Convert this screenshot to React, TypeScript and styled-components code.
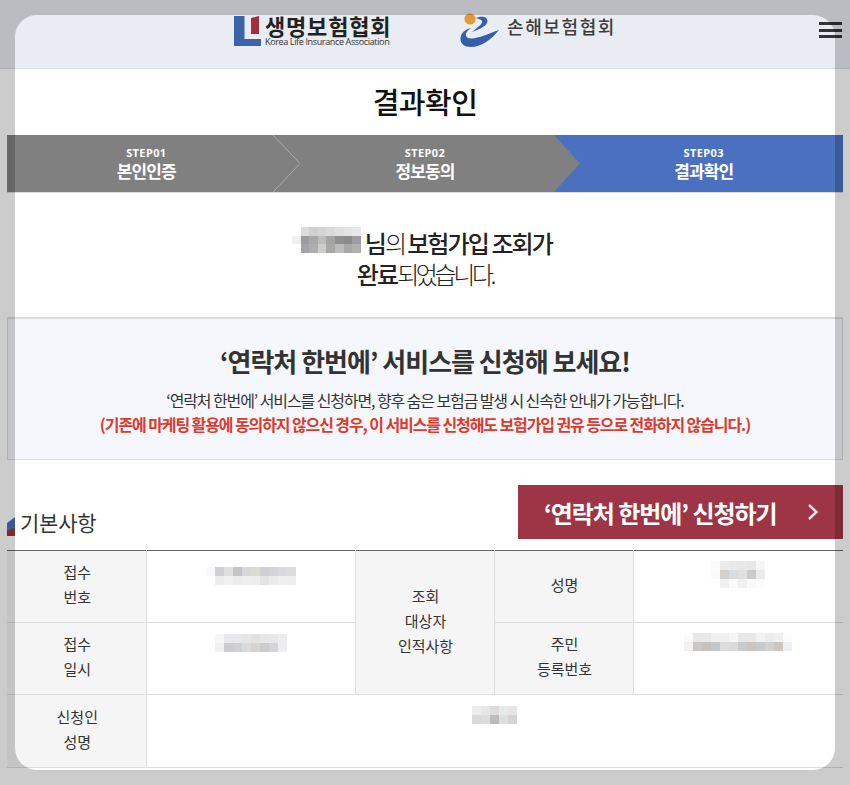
import React from "react";
import styled, { createGlobalStyle } from "styled-components";

const Global = createGlobalStyle`
  html, body { margin: 0; padding: 0; background: #fff; overflow: hidden; height: 100%; }
  body { font-family: "Noto Sans CJK KR", "Noto Sans", sans-serif; color: #333; }
  * { box-sizing: border-box; }
`;

const Page = styled.div`
  width: 850px;
  height: 785px;
  overflow: hidden;
`;

const Header = styled.header`
  height: 69px;
  background: #e9ecf2;
  border-bottom: 1px solid #dcdee2;
  display: grid;
  grid-template-columns: 1fr auto 1fr;
  align-items: start;
`;

const Logos = styled.div`
  grid-column: 2;
  display: flex;
  gap: 71px;
  padding-top: 13px;
`;

const LogoLink = styled.a`
  display: flex;
  align-items: flex-start;
  color: #2b2b2b;
`;

const LifeText = styled.div`
  margin-left: 4px;
  display: flex;
  flex-direction: column;
  width: 124px;
  padding-top: 1px;
`;

const LifeName = styled.span`
  font-size: 22px;
  font-weight: 700;
  line-height: 22px;
  letter-spacing: 0.8px;
  white-space: nowrap;
  color: #222;
`;

const LifeEng = styled.span`
  font-family: "Open Sans", "Liberation Sans", sans-serif;
  font-size: 9px;
  line-height: 12px;
  letter-spacing: -0.36px;
  white-space: nowrap;
  color: #333;
`;

const DamageName = styled.span`
  margin-left: 7px;
  font-size: 18px;
  font-weight: 500;
  line-height: 26px;
  letter-spacing: 1.6px;
  white-space: nowrap;
  color: #3d3d3d;
`;

const Burger = styled.button`
  grid-column: 3;
  justify-self: end;
  margin: 22px 8px 0 0;
  padding: 0;
  width: 23px;
  height: 16px;
  border: 0;
  background: transparent;
  display: flex;
  flex-direction: column;
  justify-content: space-between;
`;

const BurgerLine = styled.span`
  height: 3px;
  background: #333;
`;

const Title = styled.h1`
  margin: 0;
  height: 66px;
  padding-bottom: 3px;
  display: flex;
  align-items: center;
  justify-content: center;
  font-size: 29px;
  font-weight: 500;
  color: #111;
  letter-spacing: -0.5px;
`;

const Steps = styled.ol`
  list-style: none;
  margin: 0 7px;
  padding: 0;
  display: flex;
  height: 58px;
  border-bottom: 1px solid #ddd;
`;

const Step = styled.li<{ $active?: boolean }>`
  position: relative;
  flex: 1;
  height: 57px;
  background: ${(p) => (p.$active ? "#4a70bf" : "#808080")};
  color: #fff;
  display: flex;
  flex-direction: column;
  align-items: center;
  padding-top: 11px;
`;

const StepNo = styled.span`
  font-family: "Noto Sans", sans-serif;
  font-size: 11px;
  font-weight: 700;
  line-height: 14px;
  letter-spacing: 0.4px;
`;

const StepName = styled.span`
  font-size: 17px;
  font-weight: 700;
  line-height: 22px;
  letter-spacing: -0.9px;
`;

const StepArrow = styled.svg<{ $right: number }>`
  position: absolute;
  top: 0;
  right: ${(p) => p.$right}px;
  width: 27px;
  height: 57px;
  z-index: 1;
`;

const Message = styled.div`
  height: 124px;
  padding-top: 33px;
  font-size: 24px;
  line-height: 32px;
  letter-spacing: -3.4px;
  font-weight: 300;
  color: #222;
`;

const MessageLine = styled.p<{ $offset?: number }>`
  margin: 0;
  height: 32px;
  display: flex;
  justify-content: center;
  align-items: flex-start;
  gap: 4px;
  padding-right: ${(p) => p.$offset ?? 0}px;
  padding-top: ${(p) => (p.$offset ? 1 : 0)}px;
`;

const MessageText = styled.span`
  white-space: nowrap;
`;

const Strong = styled.b`
  font-weight: 500;
  letter-spacing: -1.9px;
`;

const Notice = styled.section`
  margin: 0 7px;
  height: 143px;
  background: #f5f7fc;
  border: 1px solid #ddd;
  border-top-width: 2px;
  text-align: center;
  padding-top: 23px;
`;

const NoticeTitle = styled.h2`
  margin: 0 0 8px;
  font-size: 26px;
  line-height: 38px;
  font-weight: 700;
  letter-spacing: -1px;
  color: #333;
`;

const NoticeText = styled.p<{ $red?: boolean }>`
  margin: 0;
  font-size: 16px;
  line-height: 24px;
  letter-spacing: -1.1px;
  font-weight: ${(p) => (p.$red ? 700 : 400)};
  color: ${(p) => (p.$red ? "#e0392b" : "#333")};
`;

const SectionHead = styled.div`
  margin: 25px 7px 11px;
  height: 54px;
  display: flex;
  justify-content: space-between;
  align-items: flex-end;
`;

const SectionTitle = styled.h3`
  margin: 0 0 3px;
  display: flex;
  align-items: flex-end;
  font-size: 21px;
  line-height: 27px;
  font-weight: 400;
  color: #333;
  letter-spacing: -0.2px;
  gap: 5px;
`;

const ApplyButton = styled.button`
  width: 325px;
  height: 54px;
  border: 0;
  background: #9d3546;
  color: #fff;
  font-family: inherit;
  font-size: 24px;
  font-weight: 700;
  letter-spacing: -1.05px;
  display: flex;
  align-items: center;
  justify-content: space-between;
  padding: 0 24px 0 26px;
`;

const Table = styled.table`
  margin: 0 7px;
  width: 836px;
  border-collapse: collapse;
  table-layout: fixed;
  border-top: 1px solid #666;
  font-size: 15px;
  line-height: 25px;
  color: #333;
  th, td {
    height: 72px;
    border-bottom: 1px solid #ddd;
    border-left: 1px solid #ddd;
    text-align: center;
    padding: 0;
  }
  tr > :first-child { border-left: 0; }
  tr:last-child > * { height: 73px; }
`;

const Head = styled.th`
  background: #f5f5f5;
  font-weight: 400;
  vertical-align: middle;
  && { padding: 0 0 5px 2px; }
`;

const Val = styled.td`
  vertical-align: top;
  background: #fff;
`;

const MosaicGrid = styled.span<{ $cols: number; $size: number }>`
  display: inline-grid;
  grid-template-columns: repeat(${(p) => p.$cols}, ${(p) => p.$size}px);
  grid-auto-rows: ${(p) => p.$size}px;
  flex: none;
`;

const Tile = styled.i<{ $c: string }>`
  background: ${(p) => p.$c};
`;

const CellMosaic = styled.div<{ $top: number }>`
  display: flex;
  justify-content: center;
  padding-top: ${(p) => p.$top}px;
`;

const Overlay = styled.div`
  position: fixed;
  left: 15px;
  top: 15px;
  width: 820px;
  height: 755px;
  border-radius: 22px;
  box-shadow: 0 0 0 1000px rgba(0, 0, 0, 0.2);
  pointer-events: none;
  z-index: 5;
`;

const Mosaic = ({ cols, size = 9, colors }: { cols: number; size?: number; colors: string }) => (
  <MosaicGrid $cols={cols} $size={size}>
    {colors.split(" ").map((c, i) => (
      <Tile key={i} $c={"#" + c} />
    ))}
  </MosaicGrid>
);

const LifeMark = () => (
  <svg width="27" height="33" viewBox="0 0 27 33" aria-hidden="true">
    <path d="M0 3 L10.5 3 L10.5 26 L27 26 L27 34 L0 33Z" fill="#3c62a8" />
    <path d="M17 5 L25 3 L25 21 L17 21Z" fill="#a52f3e" />
  </svg>
);

const DamageMark = () => (
  <svg width="40" height="36" viewBox="0 0 40 36" aria-hidden="true">
    <path d="M39 17 C31 27 21 34 11 34 C3 34 -1 29 1 23 C2 19 6 16 11 15 C6 18 4 23 8 25 C16 27 27 21 39 17Z" fill="#3560a8" />
    <path d="M16 5 C24 2 29 5 27 10 C25 14 19 16 12 19 C18 14 23 11 22 8 C21 6 18 6 16 5Z" fill="#3560a8" />
    <circle cx="10" cy="6" r="5.6" fill="#e59a35" />
  </svg>
);

const SectionMark = () => (
  <svg width="8" height="19" viewBox="0 0 8 19" aria-hidden="true">
    <path d="M0 6 L8 0 L8 12 L0 13Z" fill="#4a70bf" />
    <path d="M0 13 L8 11 L8 19 L0 19Z" fill="#9d3546" />
  </svg>
);

export default function App() {
  return (
    <Page>
      <Global />
      <Header>
        <Logos>
          <LogoLink>
            <LifeMark />
            <LifeText>
              <LifeName>생명보험협회</LifeName>
              <LifeEng>Korea Life Insurance Association</LifeEng>
            </LifeText>
          </LogoLink>
          <LogoLink>
            <DamageMark />
            <DamageName>손해보험협회</DamageName>
          </LogoLink>
        </Logos>
        <Burger aria-label="메뉴">
          <BurgerLine />
          <BurgerLine />
          <BurgerLine />
        </Burger>
      </Header>

      <Title>결과확인</Title>

      <Steps>
        <Step>
          <StepNo>STEP01</StepNo>
          <StepName>본인인증</StepName>
          <StepArrow $right={-14} viewBox="0 0 27 57">
            <path d="M0 0 L27 28.5 L0 57" fill="none" stroke="#ababab" strokeWidth="1" />
          </StepArrow>
        </Step>
        <Step>
          <StepNo>STEP02</StepNo>
          <StepName>정보동의</StepName>
          <StepArrow $right={-17} viewBox="0 0 27 57">
            <rect width="27" height="57" fill="#4a70bf" />
            <path d="M0 0 L26 28.5 L0 57Z" fill="#808080" />
          </StepArrow>
        </Step>
        <Step $active>
          <StepNo>STEP03</StepNo>
          <StepName>결과확인</StepName>
        </Step>
      </Steps>

      <Message>
        <MessageLine $offset={6}>
          <Mosaic
            cols={8}
            size={8.6}
            colors="ffffff dcdcdc d0d0d0 d4d4d4 dadada e0e0e0 e4e4e4 e8e8e8 f0efec 9c9c9c a8a8a8 bdbdbd a4a4a4 909090 8c8c8c 9e9e9e ffffff a4a4a8 acaeb2 cfcdc8 a8a8a8 bcbcbc a8a8aa b0b0b0"
          />
          <MessageText>
            <Strong>님</Strong>의<Strong> 보험가입 조회가</Strong>
          </MessageText>
        </MessageLine>
        <MessageLine>
          <MessageText>
            <Strong>완료</Strong>되었습니다.
          </MessageText>
        </MessageLine>
      </Message>

      <Notice>
        <NoticeTitle>‘연락처 한번에’ 서비스를 신청해 보세요!</NoticeTitle>
        <NoticeText>‘연락처 한번에’ 서비스를 신청하면, 향후 숨은 보험금 발생 시 신속한 안내가 가능합니다.</NoticeText>
        <NoticeText $red>(기존에 마케팅 활용에 동의하지 않으신 경우, 이 서비스를 신청해도 보험가입 권유 등으로 전화하지 않습니다.)</NoticeText>
      </Notice>

      <SectionHead>
        <SectionTitle>
          <SectionMark />
          기본사항
        </SectionTitle>
        <ApplyButton>
          ‘연락처 한번에’ 신청하기
          <svg width="12" height="18" viewBox="0 0 12 18" aria-hidden="true">
            <path d="M2 2 L9.5 9 L2 16" fill="none" stroke="#f1e3e5" strokeWidth="2.4" />
          </svg>
        </ApplyButton>
      </SectionHead>

      <Table>
        <colgroup>
          <col width="139" />
          <col width="209" />
          <col width="139" />
          <col width="139" />
          <col width="210" />
        </colgroup>
        <tbody>
          <tr>
            <Head>접수<br />번호</Head>
            <Val>
              <CellMosaic $top={16}>
                <Mosaic cols={10} colors="f8f8f8 d0d0d4 dfdfdf c4c4c8 d6d6da dcd8d4 d0d0d4 d4d4d4 d8dade dcdcdc ffffff ececec f0f0f0 ececee eef0f0 eeeeee e4e4e6 ebebeb eeeff0 eeeeee" />
              </CellMosaic>
            </Val>
            <Head rowSpan={2}>조회<br />대상자<br />인적사항</Head>
            <Head>성명</Head>
            <Val>
              <CellMosaic $top={10}>
                <Mosaic cols={6} colors="fbfbfb ebebeb e8eaea e8e8e8 e6e6e8 f6f6f6 fafafa d4d0ce d8dcde dfdfdf c8cace ececec ffffff f0f0f0 fafafa f0f0f0 fafafa fcfcfc" />
              </CellMosaic>
            </Val>
          </tr>
          <tr>
            <Head>접수<br />일시</Head>
            <Val>
              <CellMosaic $top={11}>
                <Mosaic cols={8} colors="f6f6f6 e8e8ea e6e8ec e6e6e8 e4e2e0 e6e6e6 e8e8ea eeeef0 f0f0f0 ccccce d0d0d2 d8dadc d6d2ce cccccc d4d4d6 eeeef0" />
              </CellMosaic>
            </Val>
            <Head>주민<br />등록번호</Head>
            <Val>
              <CellMosaic $top={10}>
                <Mosaic cols={12} colors="fbfbfb e8e8e8 e8e8e8 f0f0f0 f0f0f0 f6f6f6 e8e8e8 e8e8e8 f2f2f2 ececec f0f0f0 fdfdfd f4f2f0 c8c8c8 c8c2be c4c8cc dcdcdc dcdad8 c8cace ccc4c0 c8cace d0d0d0 ccc6c0 ecf0f4" />
              </CellMosaic>
            </Val>
          </tr>
          <tr>
            <Head>신청인<br />성명</Head>
            <Val colSpan={4}>
              <CellMosaic $top={11}>
                <Mosaic cols={5} colors="ececec e6e6e6 dedcdc e8eaea e6e6e6 dcdad8 dcdede bcbcbc dde0e0 d4d4d4" />
              </CellMosaic>
            </Val>
          </tr>
        </tbody>
      </Table>

      <Overlay />
    </Page>
  );
}
